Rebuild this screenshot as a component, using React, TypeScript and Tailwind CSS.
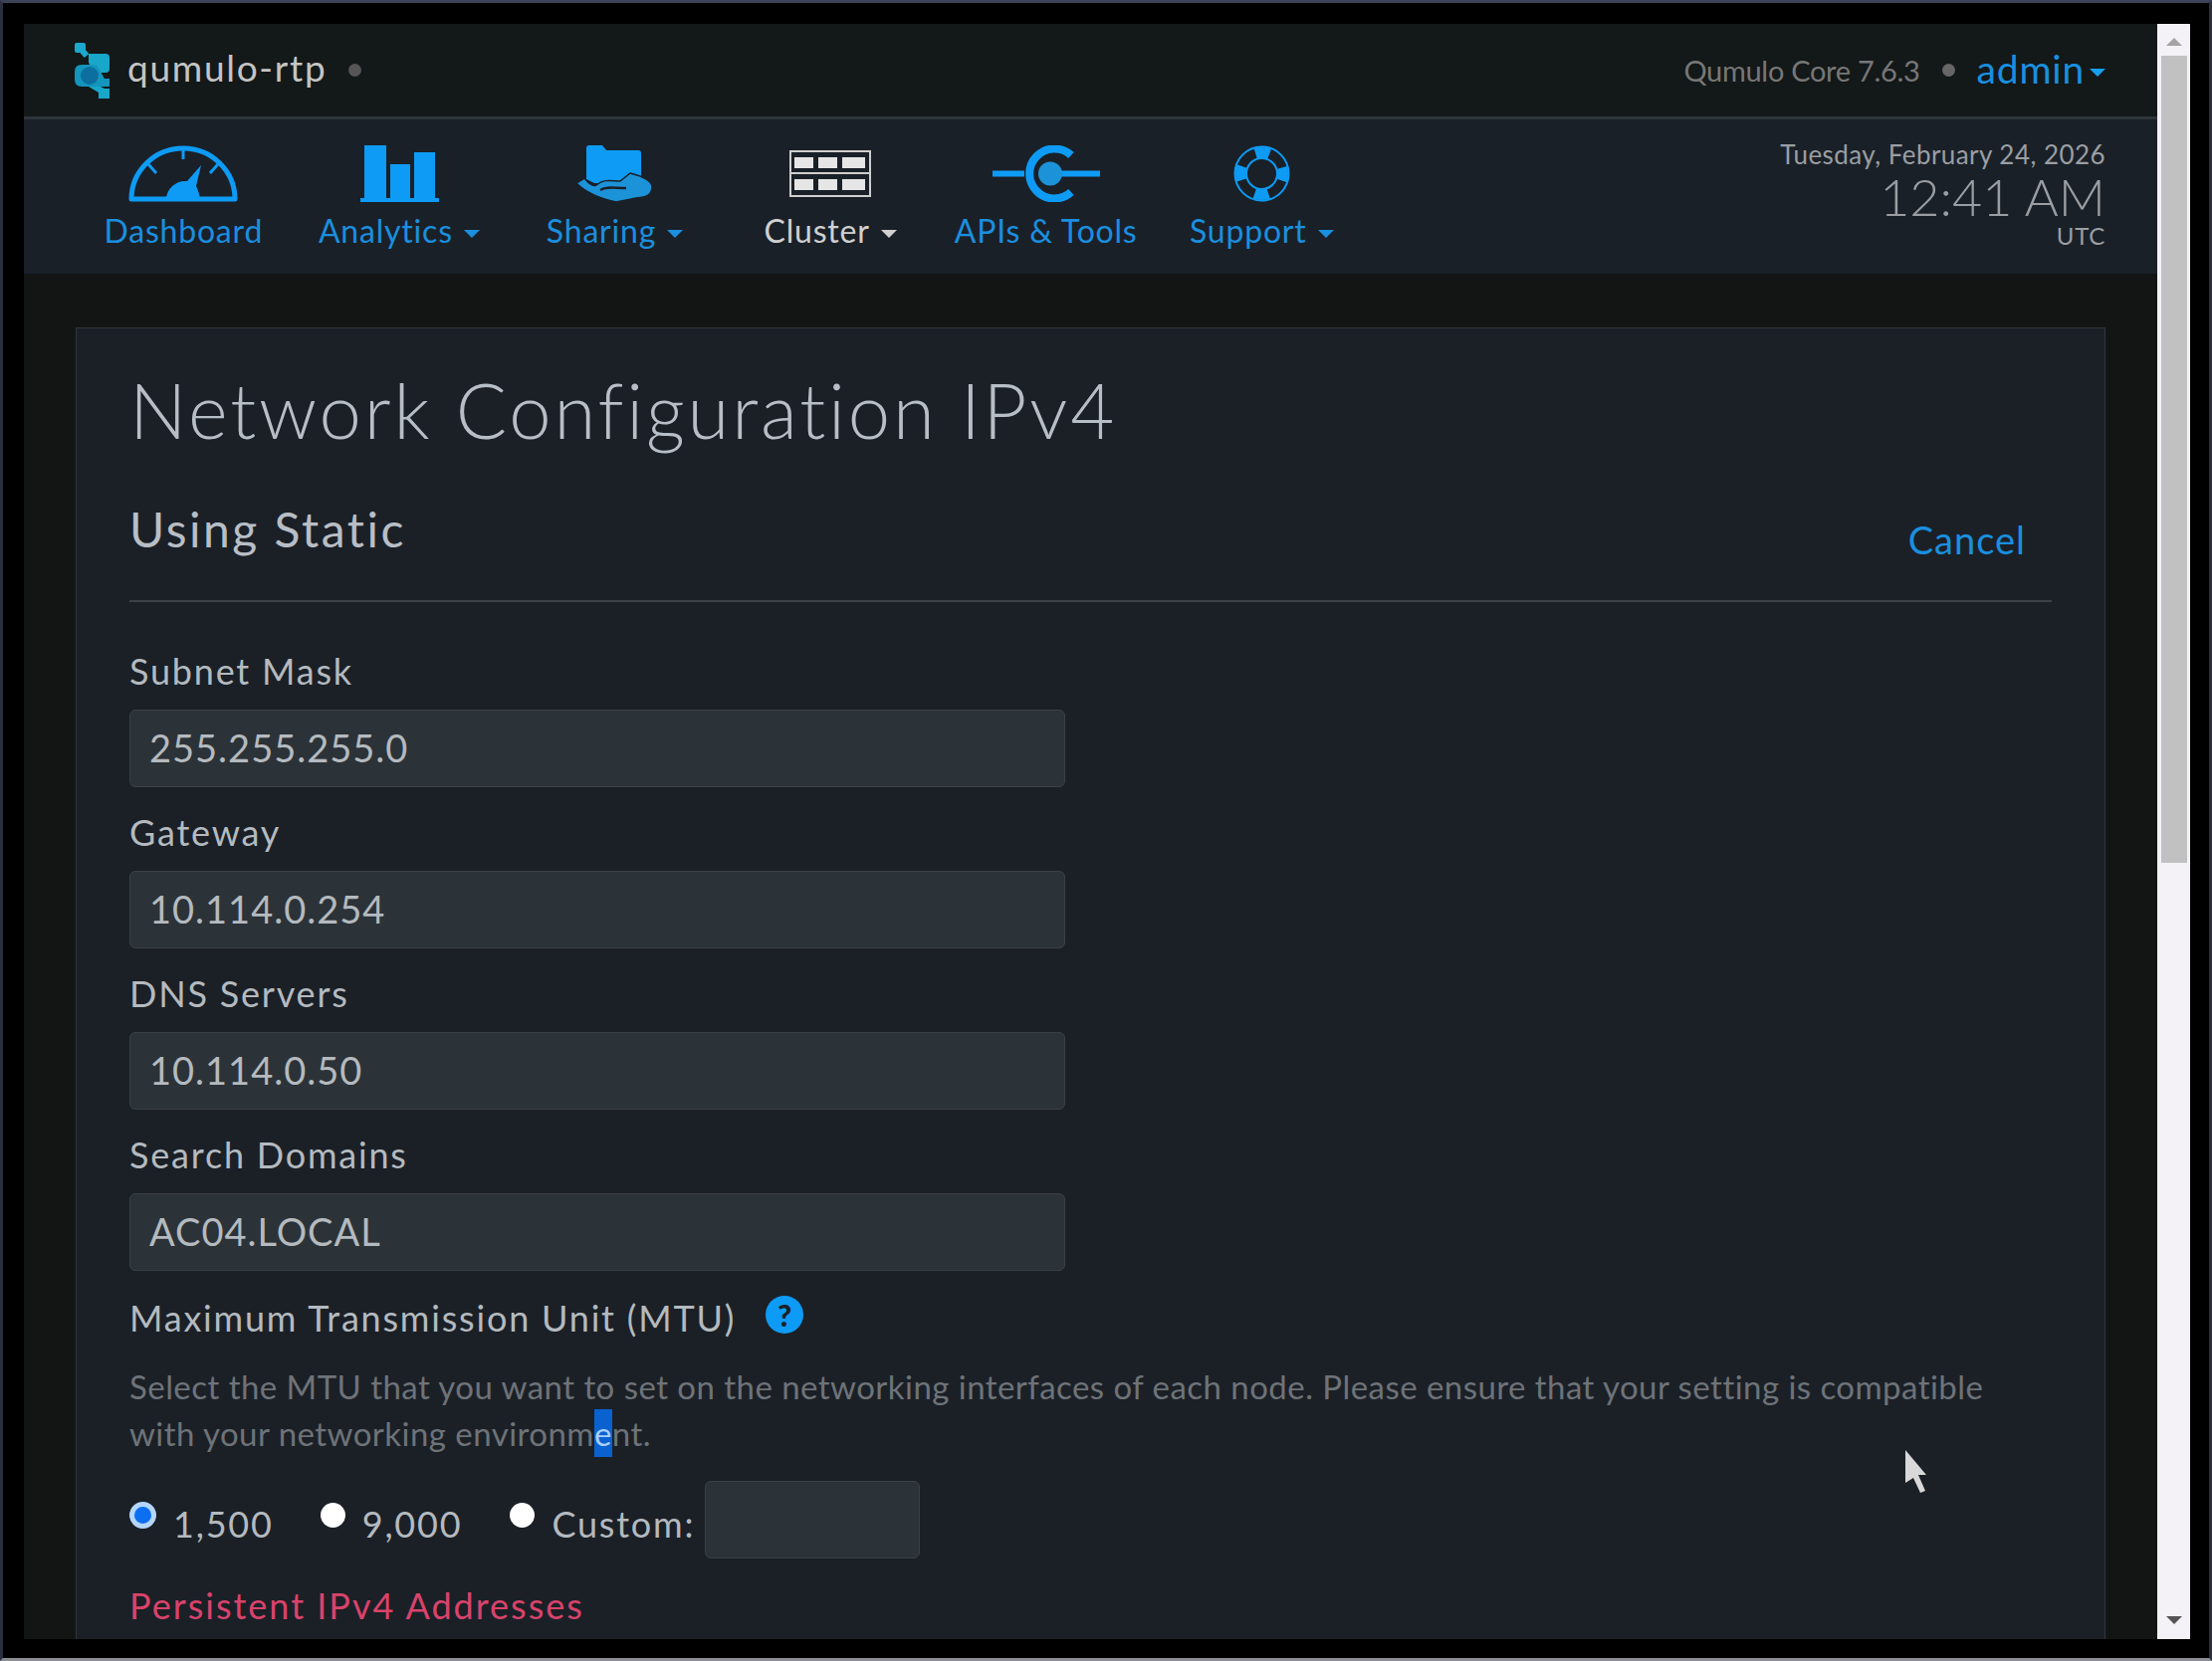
import React from "react";

const font = "font-['Lato','Liberation_Sans',sans-serif]";

function Caret({ className = "" }: { className?: string }) {
  return <span className={`inline-block border-x-[8px] border-t-[8px] border-x-transparent border-t-current ${className}`} />;
}

function Logo() {
  return (
    <svg width="35" height="56" viewBox="0 0 35 56" fill="none">
      <rect x="0" y="0" width="11" height="10" rx="2" fill="#1aa9cc" />
      <path d="M6 6 L12 13" stroke="#1aa9cc" strokeWidth="6" />
      <path d="M14 11 H31 Q35 11 35 15 V26 Q35 30 31 30 H20 L14 20 Z" fill="#18a7c9" />
      <path d="M7 22 H22 L30 36 H35 V44 H24 L7 44 Q0 44 0 37 V29 Q0 22 7 22 Z" fill="#1495bd" />
      <circle cx="15" cy="33" r="9" fill="#0c6f9f" />
      <path d="M14 44 H26 L30 46 H35 V56 H24 V50 Z" fill="#18a7c9" />
    </svg>
  );
}

function GaugeIcon() {
  return (
    <svg width="110" height="57" viewBox="0 0 110 57" fill="none">
      <path d="M3 54 A52 51 0 0 1 107 54 Z" stroke="#0d9bf5" strokeWidth="5" strokeLinejoin="round" />
      <path d="M55 3 V14 M20 19 L28 28 M90 19 L82 28" stroke="#0d9bf5" strokeWidth="3" />
      <path d="M38 53 C39 43 48 35 59 36 L73 20 L68 41 C70 45 71 49 72 53 Z" fill="#0d9bf5" />
    </svg>
  );
}

function BarsIcon() {
  return (
    <svg className="ml-[2px]" width="79" height="57" viewBox="0 0 79 57" fill="#0d9bf5">
      <rect x="4" y="0" width="22" height="55" />
      <rect x="30" y="19" width="20" height="36" />
      <rect x="54" y="7" width="21" height="48" />
      <rect x="0" y="53" width="79" height="4" />
    </svg>
  );
}

function SharingIcon() {
  return (
    <svg width="77" height="57" viewBox="0 0 77 57" fill="none">
      <path d="M10 3 Q10 0 13 0 H26 L30 5 H62 Q65 5 65 8 V34 L50 34 L36 38 L18 38 L10 34 Z" fill="#0d9bf5" />
      <path d="M0 38 L8 33 C12 38 16 42 20 40 C28 33 36 36 44 36 L54 28 C62 30 76 34 76 42 C76 50 70 52 60 53 L40 57 C26 54 10 48 0 38 Z" fill="#1c93d8" stroke="#1a2028" strokeWidth="1.5" />
      <path d="M24 45 C30 41 38 43 50 43" stroke="#1a2028" strokeWidth="2.5" />
    </svg>
  );
}

function ClusterIcon() {
  return (
    <svg width="82" height="47" viewBox="0 0 82 47">
      <rect x="1" y="1" width="80" height="45" fill="none" stroke="#cfcfcf" strokeWidth="2" />
      <rect x="1" y="22" width="80" height="2" fill="#cfcfcf" />
      {[5, 29, 53].map((x) => (
        <React.Fragment key={x}>
          <rect x={x} y="7" width={x === 53 ? 23 : 19} height="11" fill="#e6e6e6" />
          <rect x={x} y="29" width={x === 53 ? 23 : 19} height="11" fill="#e6e6e6" />
        </React.Fragment>
      ))}
    </svg>
  );
}

function ApiIcon() {
  return (
    <svg width="108" height="57" viewBox="0 0 108 57" fill="none">
      <path d="M0 28.5 H32 M68 28.5 H108" stroke="#0d9bf5" strokeWidth="6" />
      <path d="M79 10 A25 25 0 1 0 79 47" stroke="#0d9bf5" strokeWidth="8" />
      <circle cx="58" cy="28.5" r="12" fill="#1c93d8" />
    </svg>
  );
}

function RingIcon() {
  return (
    <svg width="57" height="57" viewBox="0 0 57 57" fill="none">
      <circle cx="28.5" cy="28.5" r="27" stroke="#0d9bf5" strokeWidth="2" />
      <circle cx="28.5" cy="28.5" r="15.5" stroke="#0d9bf5" strokeWidth="2" />
      <circle cx="28.5" cy="28.5" r="21" stroke="#0d9bf5" strokeWidth="11" strokeDasharray="14 19" strokeDashoffset="7" />
    </svg>
  );
}

type NavEntry = { label: string; icon: React.ReactNode; caret?: boolean; active?: boolean };

const navItems: NavEntry[] = [
  { label: "Dashboard", icon: <GaugeIcon /> },
  { label: "Analytics", icon: <BarsIcon />, caret: true },
  { label: "Sharing", icon: <SharingIcon />, caret: true },
  { label: "Cluster", icon: <ClusterIcon />, caret: true, active: true },
  { label: "APIs & Tools", icon: <ApiIcon /> },
  { label: "Support", icon: <RingIcon />, caret: true },
];

function NavItem({ item }: { item: NavEntry }) {
  return (
    <a className={`flex w-[216.6px] flex-col items-center pt-[26px] ${item.active ? "text-[#d0d0d0]" : "text-[#1a8fdf]"}`}>
      <span className="flex h-[57px] items-center">{item.icon}</span>
      <span className="mt-[7px] flex items-center gap-[11px] text-[32px] leading-[44px] tracking-[0.8px] whitespace-nowrap">
        {item.label}
        {item.caret && <Caret className="mt-[6px]" />}
      </span>
    </a>
  );
}

function Field({ label, value }: { label: string; value: string }) {
  return (
    <div className="mb-[22px]">
      <label className="block h-[50px] text-[36px] leading-[46px] tracking-[1.8px] text-[#b4babf]">{label}</label>
      <input
        readOnly
        defaultValue={value}
        className="mt-[12px] block h-[78px] w-[940px] rounded-[6px] border border-[#3a4045] bg-[#2c3338] px-[19px] pb-[3px] text-[38px] tracking-[1px] text-[#b4babf] outline-none"
      />
    </div>
  );
}

function Radio({ checked = false }: { checked?: boolean }) {
  return checked ? (
    <span className="mt-[-10px] block h-[27px] w-[27px] rounded-full border-[5px] border-[#b5d6fb] bg-[#0b6ff0]" />
  ) : (
    <span className="mt-[-10px] block h-[25px] w-[25px] rounded-full bg-white" />
  );
}

export default function App() {
  return (
    <div className={`relative flex h-[1669px] w-[2222px] overflow-hidden border-x-[3px] border-y-[3px] border-x-[#2a3040] border-t-[#3c4358] border-b-[#8b8f94] bg-black ${font}`}>
      <div className="mt-[21px] mb-[19px] ml-[21px] flex w-[2143px] flex-col overflow-hidden bg-[#131515]">
        <header className="flex h-[96px] shrink-0 items-center justify-between border-b-[3px] border-[#2e343b] bg-[#131818] pr-[52px] pl-[51px]">
          <div className="flex items-center">
            <Logo />
            <span className="mb-[5px] ml-[18px] text-[37px] tracking-[1.7px] text-[#c4c4c4]">qumulo-rtp</span>
            <span className="ml-[22px] h-[13px] w-[13px] rounded-full bg-[#555]" />
          </div>
          <div className="flex items-center">
            <span className="text-[29px] tracking-[-0.3px] text-[#777]">Qumulo Core 7.6.3</span>
            <span className="mx-[22px] h-[13px] w-[13px] rounded-full bg-[#666]" />
            <a className="mb-[3px] flex items-center gap-[5px] text-[39px] tracking-[0.8px] text-[#1a8fdf]">
              admin
              <Caret className="mt-[8px] text-[#18a0f0]" />
            </a>
          </div>
        </header>

        <nav className="flex h-[155px] shrink-0 justify-between bg-[#1a2028] pr-[52px] pl-[52px]">
          <div className="flex">
            {navItems.map((item) => (
              <NavItem key={item.label} item={item} />
            ))}
          </div>
          <div className="flex flex-col items-end pt-[20px] text-[#9a9ea2]">
            <span className="text-[26px] leading-[30px] tracking-[0.45px]">Tuesday, February 24, 2026</span>
            <span className="text-[52px] leading-[54px] font-light">12:41 AM</span>
            <span className="text-[24px] leading-[26px] tracking-[0.7px]">UTC</span>
          </div>
        </nav>

        <main className="flex-1 overflow-hidden px-[52px] pt-[54px]">
          <section className="border border-[#2f353b] bg-[#1b2027] pr-[53px] pb-[100px] pl-[53px]">
            <h1 className="pt-[38px] pb-[3px] text-[76px] leading-[88px] font-light tracking-[2.8px] text-[#b8bec5]">Network Configuration IPv4</h1>
            <div className="mt-[44px] flex h-[102px] items-start justify-between border-b-[2px] border-[#3b4147] pr-[26px]">
              <h2 className="mt-[-1px] text-[48px] leading-[60px] tracking-[2.5px] text-[#b8bec5]">Using Static</h2>
              <a className="mt-[14px] text-[38px] leading-[50px] tracking-[1px] text-[#1a8fdf]">Cancel</a>
            </div>
            <div className="mt-[46px] mb-[1px]">
              <Field label="Subnet Mask" value="255.255.255.0" />
              <Field label="Gateway" value="10.114.0.254" />
              <Field label="DNS Servers" value="10.114.0.50" />
              <Field label="Search Domains" value="AC04.LOCAL" />
            </div>
            <div className="flex items-center gap-[30px] text-[36px] leading-[50px] tracking-[1.8px] text-[#b4babf]">
              Maximum Transmission Unit (MTU)
              <span className="mt-[-6px] flex h-[38px] w-[38px] items-center justify-center rounded-full bg-[#0d9bf5] text-[30px] leading-none font-black tracking-normal text-[#1b2027]">?</span>
            </div>
            <p className="mt-[21px] text-[33px] leading-[47px] tracking-[0.45px] text-[#6e7378]">
              Select the MTU that you want to set on the networking interfaces of each node. Please ensure that your setting is compatible
              <br />
              with your networking environm<span className="bg-[#0a62d0] py-[4px] text-[#a8d0ff]">e</span>nt.
            </p>
            <div className="mt-[24px] flex h-[78px] items-center text-[36px] tracking-[1.8px] text-[#b4babf]">
              <Radio checked />
              <span className="ml-[17px] pt-[8px]">1,500</span>
              <span className="ml-[47px]"><Radio /></span>
              <span className="ml-[17px] pt-[8px]">9,000</span>
              <span className="ml-[48px]"><Radio /></span>
              <span className="ml-[17px] pt-[8px]">Custom:</span>
              <input readOnly className="ml-[10px] h-[78px] w-[216px] rounded-[6px] border border-[#3a4045] bg-[#2c3338] outline-none" />
            </div>
            <h3 className="mt-[22px] text-[36px] leading-[50px] tracking-[2px] text-[#d9436b]">Persistent IPv4 Addresses</h3>
          </section>
        </main>
      </div>

      <div className="mt-[21px] mb-[19px] flex w-[33px] flex-col items-center bg-[#f4f1f7]">
        <span className="mt-[14px] h-0 w-0 border-x-[8px] border-b-[8px] border-x-transparent border-b-[#a3a3a3]" />
        <span className="mt-[10px] h-[811px] w-[26px] bg-[#c1c1c1]" />
        <span className="mt-auto mb-[15px] h-0 w-0 border-x-[8px] border-t-[8px] border-x-transparent border-t-[#555]" />
      </div>

      <svg className="absolute top-[1454px] left-[1910px]" width="24" height="44" viewBox="0 0 24 44">
        <path d="M1 0 L22 25 L14 25 L21 41 L16 43 L9 28 L1 33 Z" fill="#d8d8d8" />
      </svg>
    </div>
  );
}
